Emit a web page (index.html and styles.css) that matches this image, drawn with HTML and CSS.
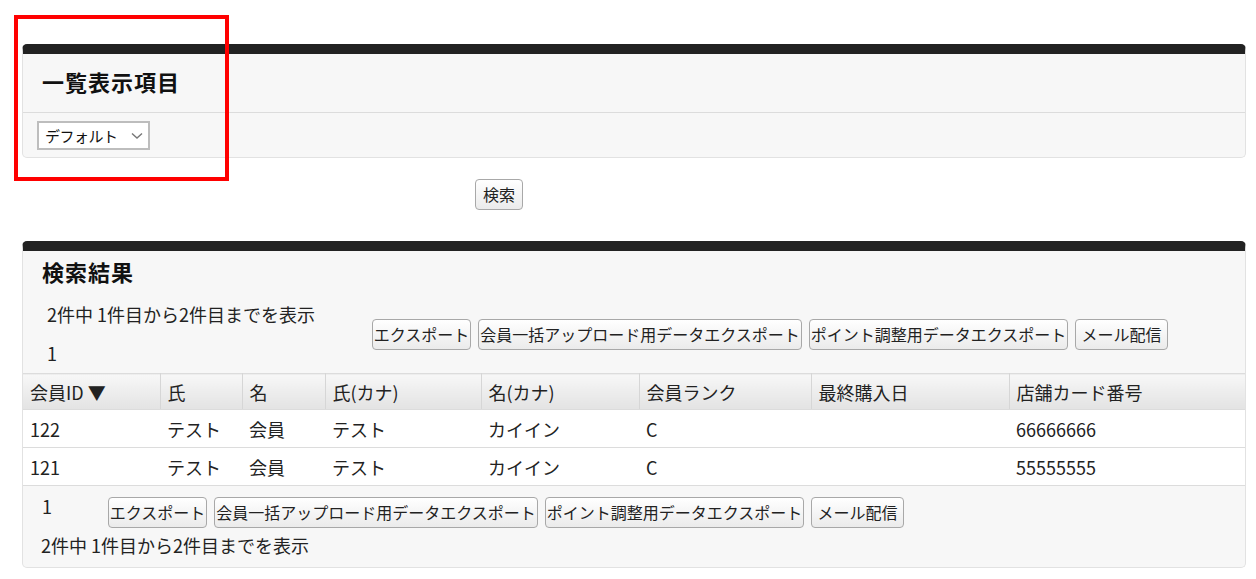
FILE: index.html
```html
<!DOCTYPE html>
<html lang="ja">
<head>
<meta charset="utf-8">
<title>会員一覧</title>
<link rel="stylesheet" href="styles.css">
</head>
<body>
<div class="page">
  <section class="panel">
    <h2 class="panel-title">一覧表示項目</h2>
    <div class="panel-body">
      <div class="select-wrap">
        <select class="select"><option>デフォルト</option></select>
        <svg class="chevron" width="12" height="8" viewBox="0 0 12 8"><path d="M1 1.5 L6 6 L11 1.5" fill="none" stroke="#777" stroke-width="1.4"/></svg>
      </div>
    </div>
  </section>

  <div class="search-row">
    <button class="btn btn-search">検索</button>
  </div>

  <section class="panel panel-results">
    <h2 class="panel-title panel-title-results">検索結果</h2>
    <div class="info-row">
      <div class="info-left">
        <div class="info-line">2件中 1件目から2件目までを表示</div>
        <div class="info-line">1</div>
      </div>
      <div class="btn-group">
        <button class="btn btn-export">エクスポート</button>
        <button class="btn btn-bulk">会員一括アップロード用データエクスポート</button>
        <button class="btn btn-point">ポイント調整用データエクスポート</button>
        <button class="btn btn-mail">メール配信</button>
      </div>
    </div>
    <table class="result-table">
      <colgroup>
        <col class="c-id"><col class="c-sei"><col class="c-mei"><col class="c-seik"><col class="c-meik"><col class="c-rank"><col class="c-date"><col>
      </colgroup>
      <thead>
        <tr><th>会員ID ▼</th><th>氏</th><th>名</th><th>氏(カナ)</th><th>名(カナ)</th><th>会員ランク</th><th>最終購入日</th><th>店舗カード番号</th></tr>
      </thead>
      <tbody>
        <tr><td>122</td><td>テスト</td><td>会員</td><td>テスト</td><td>カイイン</td><td>C</td><td></td><td>66666666</td></tr>
        <tr><td>121</td><td>テスト</td><td>会員</td><td>テスト</td><td>カイイン</td><td>C</td><td></td><td>55555555</td></tr>
      </tbody>
    </table>
    <div class="footer">
      <div class="footer-row">
        <div class="footer-page">1</div>
        <div class="btn-group">
          <button class="btn btn-export">エクスポート</button>
          <button class="btn btn-bulk">会員一括アップロード用データエクスポート</button>
          <button class="btn btn-point">ポイント調整用データエクスポート</button>
          <button class="btn btn-mail">メール配信</button>
        </div>
      </div>
      <div class="footer-count">2件中 1件目から2件目までを表示</div>
    </div>
  </section>
</div>
<div class="highlight"></div>
</body>
</html>
```

FILE: styles.css
```css
* { box-sizing: border-box; }

body {
  margin: 0;
  background: #fff;
  color: #222;
  font-family: "Noto Sans CJK JP", "Noto Sans", sans-serif;
  font-size: 18px;
}

.page {
  padding: 44px 10px 0 22px;
}

.panel {
  background: #f7f7f7;
  border: 1px solid #e2e2e2;
  border-top: 10px solid #222;
  border-radius: 5px;
}

.panel-title {
  margin: 0;
  height: 59px;
  line-height: 54px;
  padding-left: 19px;
  font-size: 22px;
  font-weight: bold;
  letter-spacing: 1px;
  color: #111;
  border-bottom: 1px solid #dcdcdc;
}

.panel-body {
  padding: 8px 14px 7px;
}

.select-wrap {
  position: relative;
  width: 113px;
  height: 29px;
}

.select {
  appearance: none;
  -webkit-appearance: none;
  width: 113px;
  height: 29px;
  margin: 0;
  padding: 0 0 0 6px;
  border: 2px solid #bdbdbd;
  border-radius: 0;
  background: #fff;
  color: #111;
  font-family: "Noto Sans CJK JP", sans-serif;
  font-size: 15px;
  letter-spacing: -0.5px;
  line-height: 25px;
}

.chevron {
  position: absolute;
  left: 94px;
  top: 11px;
  pointer-events: none;
}

.search-row {
  margin-top: 21px;
  padding-left: 453px;
  height: 31px;
}

.btn {
  height: 31px;
  margin: 0;
  padding: 0;
  border: 1px solid #a8a8a8;
  border-radius: 4px;
  background: linear-gradient(#ffffff, #ebebeb);
  color: #222;
  font-family: "Noto Sans CJK JP", sans-serif;
  font-size: 16px;
  line-height: 29px;
  text-align: center;
  white-space: nowrap;
}

.btn-search { width: 48px; }
.btn-export { width: 99px; }
.btn-bulk { width: 324px; }
.btn-point { width: 259px; }
.btn-mail { width: 93px; }

.panel-results {
  margin-top: 31px;
}

.panel-title-results {
  height: 36px;
  line-height: 30px;
  padding-top: 5px;
  border-bottom: none;
}

.info-row {
  display: flex;
  align-items: center;
  padding-top: 8px;
}

.info-left {
  width: 349px;
  padding-left: 24px;
}

.info-line {
  line-height: 39px;
  height: 39px;
}

.btn-group {
  display: flex;
  gap: 7px;
}

.result-table {
  width: 100%;
  border-collapse: collapse;
  table-layout: fixed;
}

.c-id { width: 137px; }
.c-sei { width: 82px; }
.c-mei { width: 83px; }
.c-seik { width: 156px; }
.c-meik { width: 158px; }
.c-rank { width: 172px; }
.c-date { width: 198px; }

.result-table th {
  height: 36px;
  padding: 0 7px;
  text-align: left;
  font-weight: normal;
  color: #222;
  background: linear-gradient(#f7f7f7, #e3e3e3);
  border-top: 1px solid #dcdcdc;
  border-bottom: 1px solid #dcdcdc;
  border-right: 1px solid #d6d6d6;
  white-space: nowrap;
}

.result-table th:last-child { border-right: none; }

.result-table td {
  height: 38px;
  padding: 0 7px;
  background: #fff;
  border-bottom: 1px solid #dcdcdc;
  white-space: nowrap;
}

.footer {
  padding: 11px 0 10px 18px;
}

.footer-row {
  display: flex;
  align-items: flex-start;
}

.footer-page {
  width: 67px;
  line-height: 18px;
  padding-left: 1px;
}

.footer-count {
  margin-top: 5px;
  line-height: 24px;
}

.highlight {
  position: absolute;
  left: 14px;
  top: 15px;
  width: 215px;
  height: 166px;
  border: 4px solid #f00;
}
```
